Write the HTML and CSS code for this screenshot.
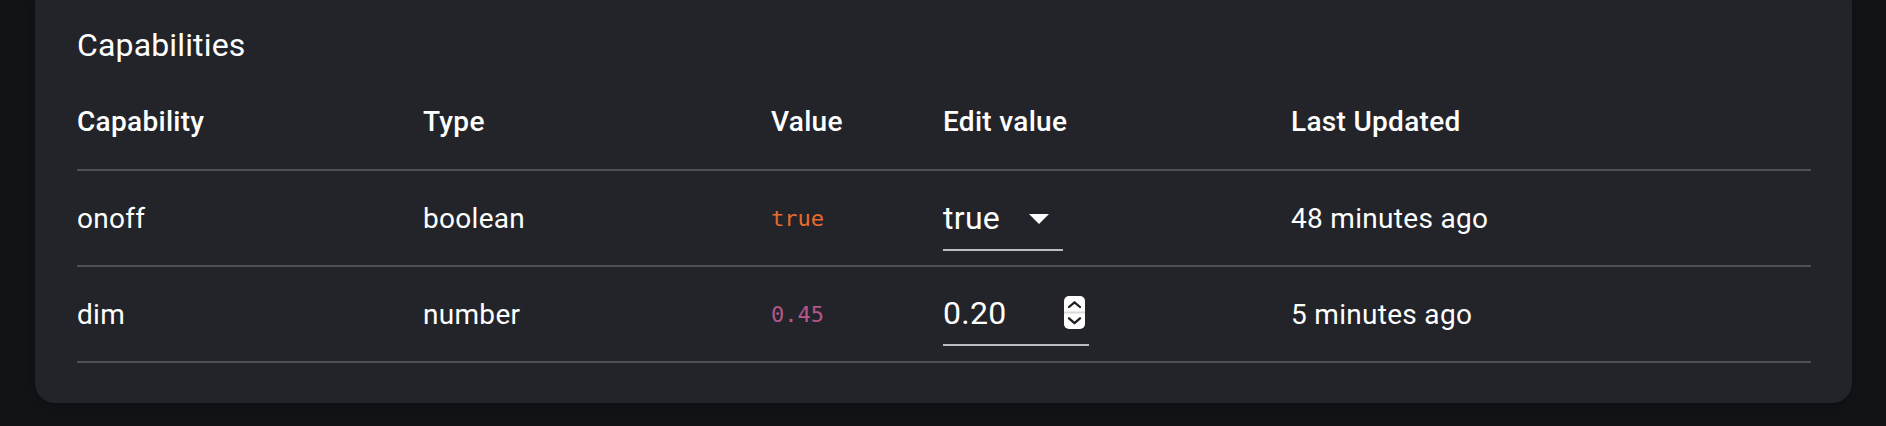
FILE: index.html
```html
<!DOCTYPE html>
<html lang="en">
<head>
<meta charset="utf-8">
<title>Capabilities</title>
<link rel="stylesheet" href="styles.css">
</head>
<body>
<section class="card">
  <h2 class="title">Capabilities</h2>
  <div class="table">
    <div class="row head">
      <div class="cell">Capability</div>
      <div class="cell">Type</div>
      <div class="cell">Value</div>
      <div class="cell">Edit value</div>
      <div class="cell">Last Updated</div>
    </div>
    <div class="row">
      <div class="cell">onoff</div>
      <div class="cell">boolean</div>
      <div class="cell mono bool">true</div>
      <div class="cell edit">
        <div class="field select">
          <span class="field-text">true</span>
          <svg class="arrow" width="48" height="48" viewBox="0 0 24 24"><path d="M7 10l5 5 5-5z" fill="#ffffff"/></svg>
        </div>
      </div>
      <div class="cell">48 minutes ago</div>
    </div>
    <div class="row">
      <div class="cell">dim</div>
      <div class="cell">number</div>
      <div class="cell mono num">0.45</div>
      <div class="cell edit">
        <div class="field number">
          <span class="field-text">0.20</span>
          <svg class="spin" width="21" height="33" viewBox="0 0 21 33">
            <rect x="0" y="0" width="21" height="33" rx="5" fill="#ffffff"/>
            <rect x="0" y="15.5" width="21" height="2" fill="#d9d9d9"/>
            <polyline points="5,11 10.5,6.3 16,11" fill="none" stroke="#1e1f23" stroke-width="2.3" stroke-linecap="round" stroke-linejoin="round"/>
            <polyline points="5,22.3 10.5,27.2 16,22.3" fill="none" stroke="#1e1f23" stroke-width="2.3" stroke-linecap="round" stroke-linejoin="round"/>
          </svg>
        </div>
      </div>
      <div class="cell">5 minutes ago</div>
    </div>
  </div>
</section>
</body>
</html>
```
FILE: styles.css
```css
html, body {
  margin: 0;
  padding: 0;
  background: #121317;
}

body {
  font-family: Roboto, "Liberation Sans", sans-serif;
  color: #ffffff;
  height: 426px;
  overflow: hidden;
}

.card {
  margin-left: 35px;
  width: 1817px;
  box-sizing: border-box;
  padding: 25px 41px 40px 42px;
  background: #232429;
  border-radius: 0 0 20px 20px;
  box-shadow: 0 2px 6px rgba(0, 0, 0, 0.25);
}

.title {
  margin: 0 0 9px 0;
  font-size: 32px;
  line-height: 40px;
  font-weight: 400;
  letter-spacing: 0.15px;
}

.table {
  display: flex;
  flex-direction: column;
}

.row {
  display: grid;
  grid-template-columns: 346px 348px 172px 348px 1fr;
  border-bottom: 2px solid #505052;
}

.cell {
  font-size: 28px;
  line-height: 32px;
  letter-spacing: 0.3px;
  height: 94px;
  box-sizing: border-box;
  padding-top: 32px;
  white-space: nowrap;
}

.head .cell {
  font-weight: 500;
  height: 95px;
}

.mono {
  font-family: "DejaVu Sans Mono", "Liberation Mono", monospace;
  font-size: 22px;
  letter-spacing: 0;
}

.bool {
  color: #e66b2e;
}

.num {
  color: #b4578b;
}

.cell.edit {
  padding-top: 0;
  display: flex;
  align-items: center;
}

.field {
  position: relative;
  box-sizing: border-box;
  height: 64px;
  padding-top: 8px;
  border-bottom: 2px solid rgba(255, 255, 255, 0.7);
  font-size: 32px;
  line-height: 46px;
  letter-spacing: 0.3px;
}

.select {
  width: 120px;
  margin-top: 2px;
}

.number {
  width: 146px;
  margin-top: -1px;
}

.arrow {
  position: absolute;
  right: 0;
  top: 7px;
}

.spin {
  position: absolute;
  right: 4px;
  top: 14px;
}
```
